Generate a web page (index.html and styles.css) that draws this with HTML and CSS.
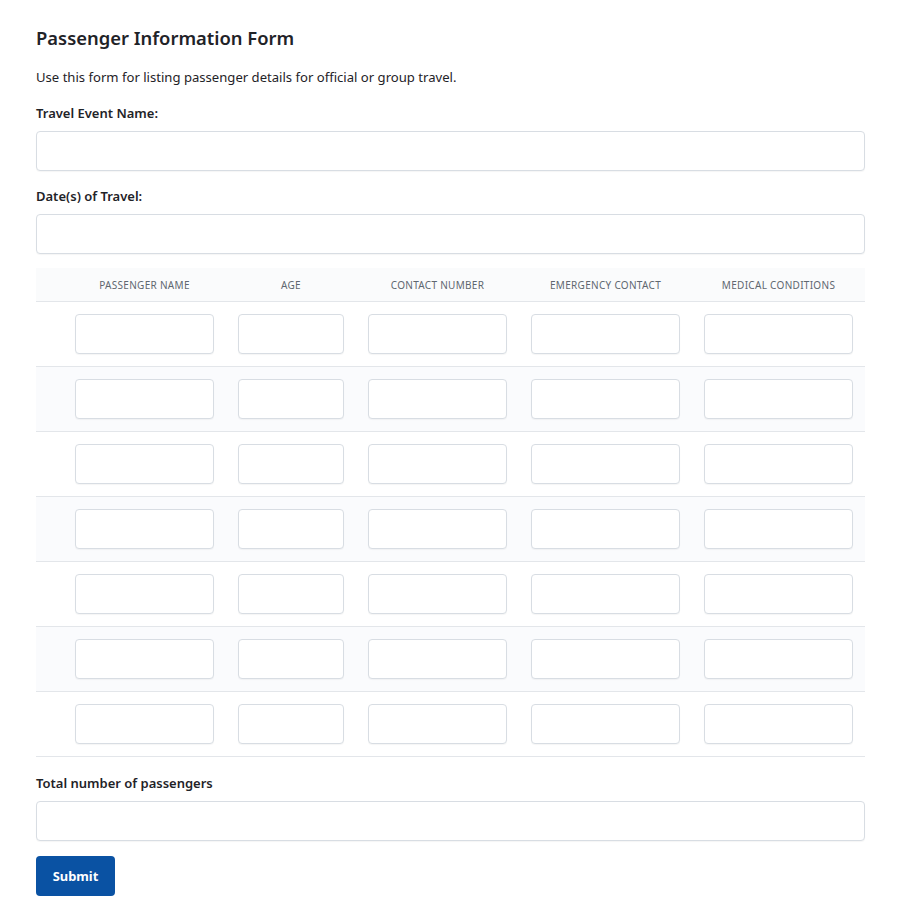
FILE: index.html
```html
<!DOCTYPE html>
<html>
<head>
<meta charset="utf-8">
<link rel="stylesheet" href="styles.css">
</head>
<body>
<main class="form">
  <h1 class="title">Passenger Information Form</h1>
  <p class="desc">Use this form for listing passenger details for official or group travel.</p>
  <label class="label">Travel Event Name:</label>
  <div class="input wide"></div>
  <label class="label">Date(s) of Travel:</label>
  <div class="input wide"></div>
  <div class="table">
    <div class="row head">
      <div class="cell"></div>
      <div class="cell">Passenger Name</div>
      <div class="cell">Age</div>
      <div class="cell">Contact Number</div>
      <div class="cell">Emergency Contact</div>
      <div class="cell">Medical Conditions</div>
    </div>
    <div class="row"><div class="cell"></div><div class="cell"><div class="input"></div></div><div class="cell"><div class="input"></div></div><div class="cell"><div class="input"></div></div><div class="cell"><div class="input"></div></div><div class="cell"><div class="input"></div></div></div>
    <div class="row alt"><div class="cell"></div><div class="cell"><div class="input"></div></div><div class="cell"><div class="input"></div></div><div class="cell"><div class="input"></div></div><div class="cell"><div class="input"></div></div><div class="cell"><div class="input"></div></div></div>
    <div class="row"><div class="cell"></div><div class="cell"><div class="input"></div></div><div class="cell"><div class="input"></div></div><div class="cell"><div class="input"></div></div><div class="cell"><div class="input"></div></div><div class="cell"><div class="input"></div></div></div>
    <div class="row alt"><div class="cell"></div><div class="cell"><div class="input"></div></div><div class="cell"><div class="input"></div></div><div class="cell"><div class="input"></div></div><div class="cell"><div class="input"></div></div><div class="cell"><div class="input"></div></div></div>
    <div class="row"><div class="cell"></div><div class="cell"><div class="input"></div></div><div class="cell"><div class="input"></div></div><div class="cell"><div class="input"></div></div><div class="cell"><div class="input"></div></div><div class="cell"><div class="input"></div></div></div>
    <div class="row alt"><div class="cell"></div><div class="cell"><div class="input"></div></div><div class="cell"><div class="input"></div></div><div class="cell"><div class="input"></div></div><div class="cell"><div class="input"></div></div><div class="cell"><div class="input"></div></div></div>
    <div class="row"><div class="cell"></div><div class="cell"><div class="input"></div></div><div class="cell"><div class="input"></div></div><div class="cell"><div class="input"></div></div><div class="cell"><div class="input"></div></div><div class="cell"><div class="input"></div></div></div>
  </div>
  <label class="label total">Total number of passengers</label>
  <div class="input wide"></div>
  <button class="submit" type="button">Submit</button>
</main>
</body>
</html>
```
FILE: styles.css
```css
html, body {
  margin: 0;
  padding: 0;
  background: #ffffff;
}
body {
  font-family: "Noto Sans", "Open Sans", sans-serif;
  color: #1f2328;
}
.form {
  width: 829px;
  padding: 24px 36px;
  display: flex;
  flex-direction: column;
}
.title {
  margin: 2px 0 0;
  font-size: 18.4px;
  font-weight: 600;
  line-height: 24px;
}
.desc {
  margin: 17px 0 1px;
  font-size: 13.1px;
  line-height: 20px;
}
.label {
  display: block;
  margin-top: 15px;
  font-size: 13px;
  font-weight: 600;
  line-height: 20px;
}
.label.total {
  margin-top: 16px;
}
.input {
  box-sizing: border-box;
  height: 40px;
  border: 1px solid #d8dde3;
  border-radius: 4px;
  background: #fff;
  box-shadow: 0 1px 1px rgba(0,0,0,0.04);
}
.input.wide {
  margin-top: 8px;
}
.table {
  margin-top: 14px;
  display: flex;
  flex-direction: column;
}
.row {
  display: grid;
  grid-template-columns: 27px 163px 130px 163px 173px 173px;
  border-bottom: 1px solid #e3e6ea;
}
.row.head {
  background: #fafbfc;
  height: 34px;
  box-sizing: border-box;
  align-items: center;
}
.row.head .cell {
  text-align: center;
  font-size: 10px;
  text-transform: uppercase;
  letter-spacing: 0.3px;
  color: #5f6770;
  line-height: 14px;
  padding: 0 12px;
}
.row.alt {
  background: #fafbfd;
}
.row .cell {
  padding: 12px 12px;
}
.row .cell:first-child {
  padding: 0;
}
.submit {
  align-self: flex-start;
  margin-top: 15px;
  width: 79px;
  height: 40px;
  border: none;
  border-radius: 4px;
  background: #0a52a3;
  color: #fff;
  font-family: "Noto Sans", "Open Sans", sans-serif;
  font-size: 12.9px;
  font-weight: 700;
  padding: 0;
}
```
